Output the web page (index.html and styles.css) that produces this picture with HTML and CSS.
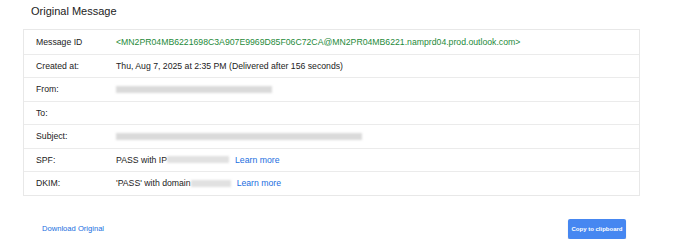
FILE: index.html
```html
<!DOCTYPE html>
<html>
<head>
<meta charset="utf-8">
<link rel="stylesheet" href="styles.css">
</head>
<body>
<div class="page">
  <h1 class="title">Original Message</h1>
  <div class="details">
    <div class="row">
      <div class="label">Message ID</div>
      <div class="value id">&lt;MN2PR04MB6221698C3A907E9969D85F06C72CA@MN2PR04MB6221.namprd04.prod.outlook.com&gt;</div>
    </div>
    <div class="row">
      <div class="label">Created at:</div>
      <div class="value">Thu, Aug 7, 2025 at 2:35 PM (Delivered after 156 seconds)</div>
    </div>
    <div class="row">
      <div class="label">From:</div>
      <div class="value"><span class="blur blur-from"></span></div>
    </div>
    <div class="row">
      <div class="label">To:</div>
      <div class="value"></div>
    </div>
    <div class="row">
      <div class="label">Subject:</div>
      <div class="value"><span class="blur blur-subject"></span></div>
    </div>
    <div class="row">
      <div class="label">SPF:</div>
      <div class="value">PASS with IP<span class="blur blur-ip"></span><a class="link learn" href="#">Learn more</a></div>
    </div>
    <div class="row">
      <div class="label">DKIM:</div>
      <div class="value">'PASS' with domain<span class="blur blur-domain"></span><a class="link learn" href="#">Learn more</a></div>
    </div>
  </div>
  <div class="actions">
    <a class="link download" href="#">Download Original</a>
    <button class="copy">Copy to clipboard</button>
  </div>
</div>
</body>
</html>
```

FILE: styles.css
```css
* { box-sizing: border-box; }
body {
  margin: 0;
  background: #fff;
  font-family: "Liberation Sans", Arial, sans-serif;
  color: #222;
}
.page {
  width: 689px;
  padding-top: 5px;
}
.title {
  margin: 0 0 11px 31px;
  font-size: 11px;
  line-height: 13px;
  font-weight: normal;
  color: #222;
}
.details {
  margin-left: 23px;
  width: 617px;
  border: 1px solid #e8e8e8;
}
.row {
  display: grid;
  grid-template-columns: 80px 1fr;
  align-items: center;
  height: 23.5px;
  padding-left: 12px;
  font-size: 8.7px;
  border-top: 1px solid #ebebeb;
}
.row:first-child { border-top: none; }
.label { color: #222; }
.value {
  display: flex;
  align-items: center;
  white-space: nowrap;
  color: #222;
}
.id { color: #1e8a3a; }
.link {
  color: #1a6ee0;
  text-decoration: none;
}
.learn { margin-left: 6px; }
.blur {
  display: inline-block;
  height: 7px;
  background: #d2d2d2;
  filter: blur(1.2px);
  opacity: 0.8;
}
.blur-from { width: 156px; }
.blur-subject { width: 246px; }
.blur-ip { width: 62px; background: #dadada; }
.blur-domain { width: 40px; background: #dadada; }
.actions {
  display: flex;
  justify-content: space-between;
  align-items: center;
  margin-top: 23px;
  padding-left: 42px;
  padding-right: 63px;
}
.download {
  font-size: 7.6px;
}
.copy {
  width: 58px;
  height: 20px;
  padding: 0;
  border: none;
  border-radius: 2px;
  background: #4687f1;
  box-shadow: 0 1px 1px rgba(0,0,0,0.25);
  color: #fff;
  font-family: "Liberation Sans", Arial, sans-serif;
  font-weight: bold;
  font-size: 6px;
  cursor: pointer;
}
```
